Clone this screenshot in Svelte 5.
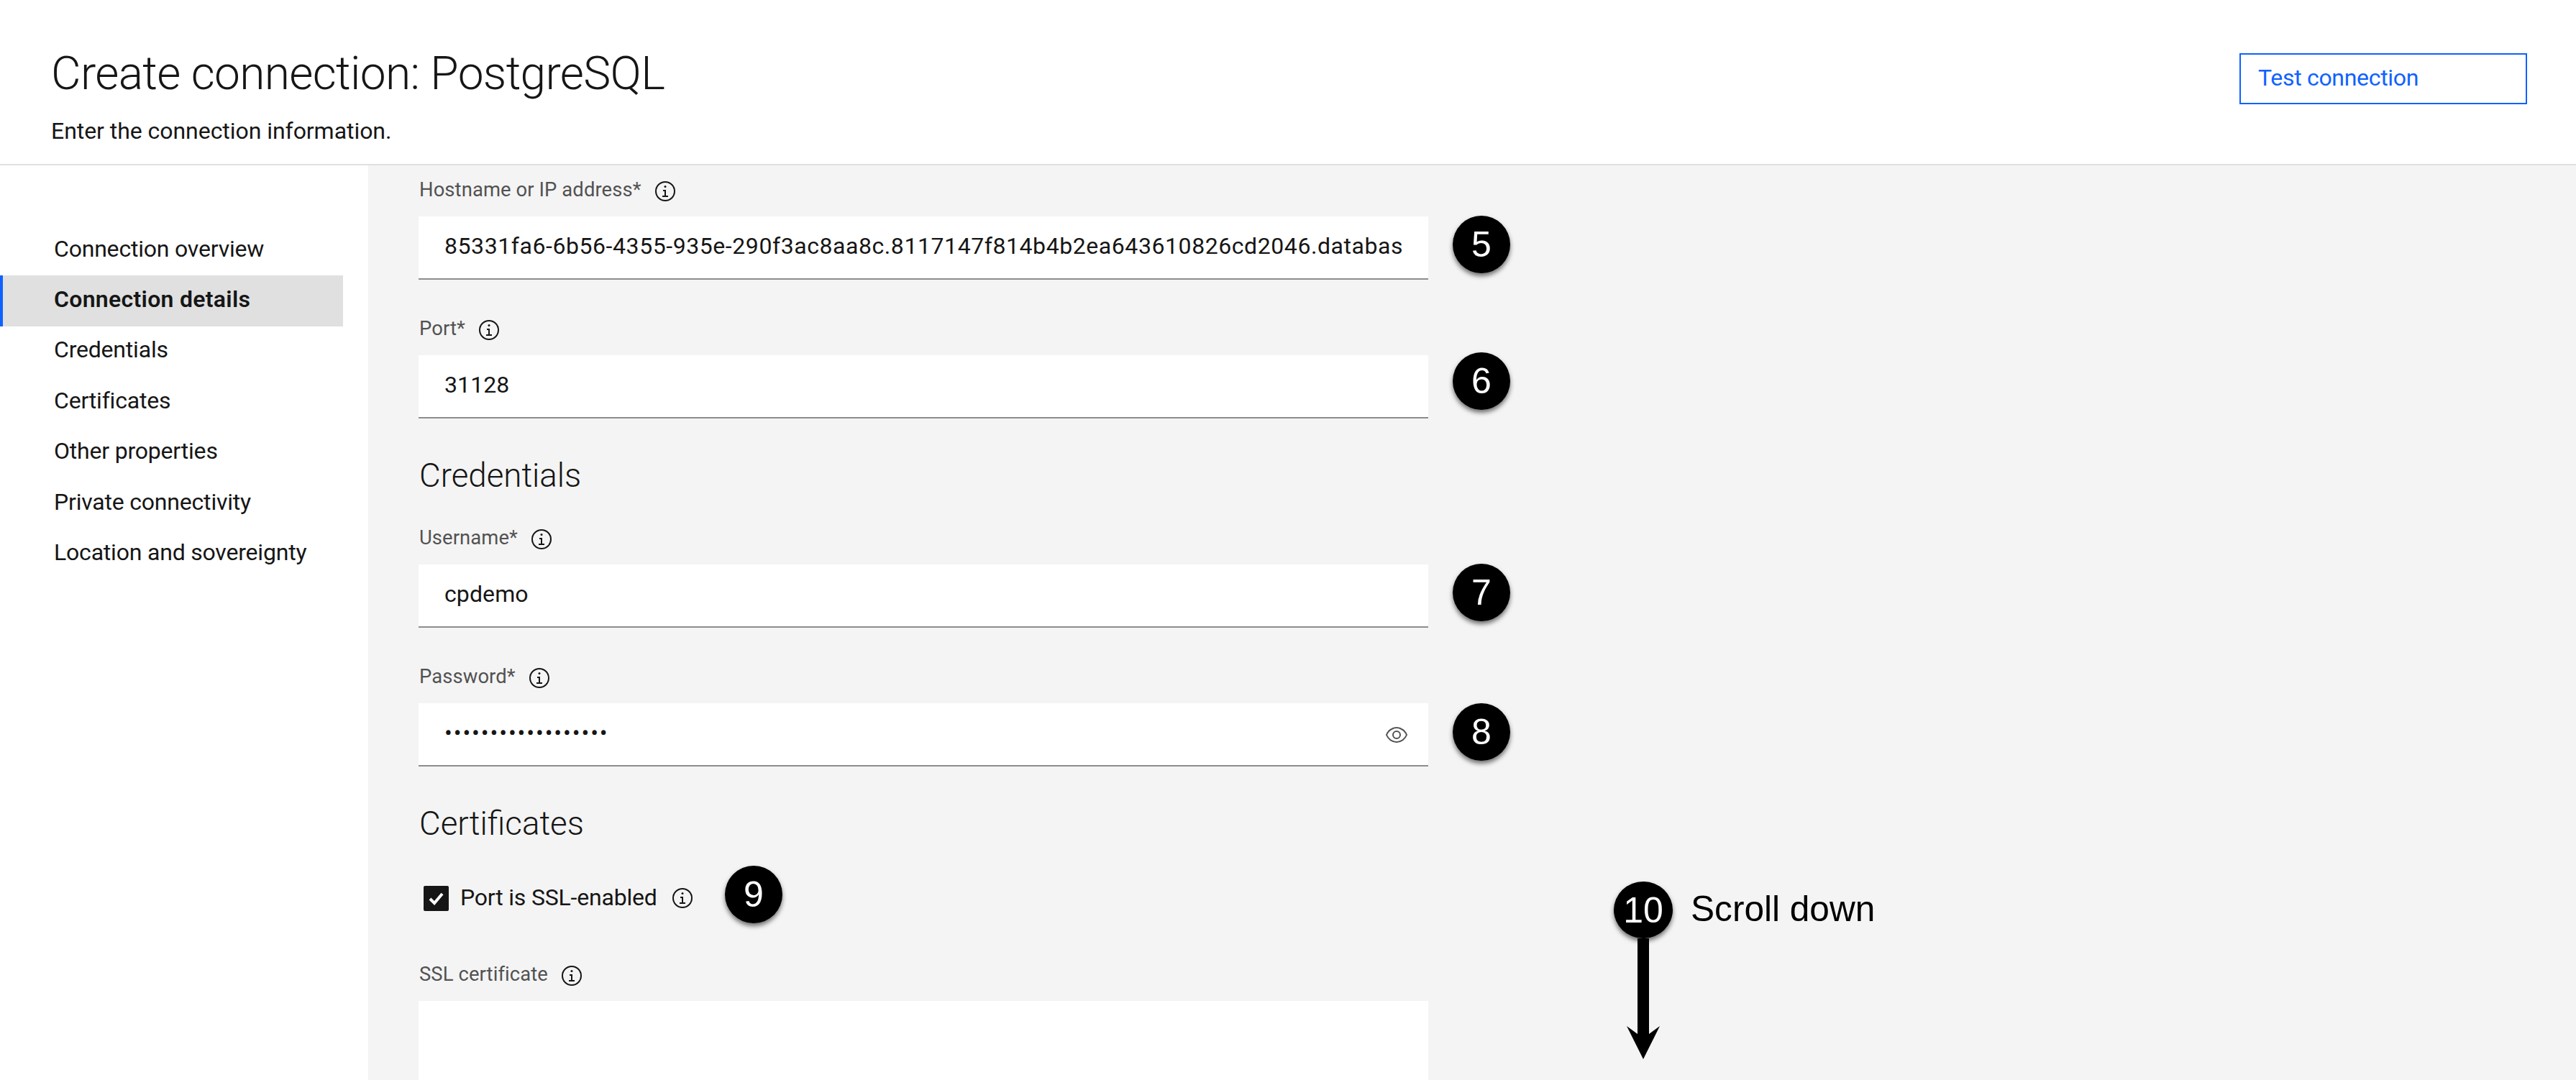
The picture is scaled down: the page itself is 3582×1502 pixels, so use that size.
<script>
  const nav = ['Connection overview', 'Connection details', 'Credentials', 'Certificates', 'Other properties', 'Private connectivity', 'Location and sovereignty'];
</script>

{#snippet info()}
  <svg class="info" viewBox="0 0 16 16" aria-hidden="true">
    <path d="M8.5 11V7h-2v1h1v3H6v1h4v-1z" />
    <path d="M8 4a.75.75 0 1 0 0 1.5A.75.75 0 0 0 8 4z" />
    <path d="M8 15A7 7 0 1 1 8 1a7 7 0 0 1 0 14zM8 2a6 6 0 1 0 0 12A6 6 0 0 0 8 2z" />
  </svg>
{/snippet}

{#snippet field(label, value, badge, offset, type)}
  <div class="group">
    <div class="label"><span>{label}</span>{@render info()}</div>
    <div class="field">
      {#if type === 'password'}
        <span class="dots">{value}</span>
        <svg class="eye" viewBox="0 0 16 16" aria-hidden="true">
          <path d="M15.47 7.83A8.35 8.35 0 0 0 8 2.5 8.35 8.35 0 0 0 .53 7.83a.5.5 0 0 0 0 .34A8.35 8.35 0 0 0 8 13.5a8.35 8.35 0 0 0 7.47-5.33.5.5 0 0 0 0-.34zM8 12.5c-2.65 0-5.45-1.96-6.47-4.5C2.55 5.46 5.35 3.5 8 3.5s5.45 1.96 6.47 4.5C13.45 10.54 10.65 12.5 8 12.5z" />
          <path d="M8 5a3 3 0 1 0 0 6 3 3 0 0 0 0-6zm0 5a2 2 0 1 1 0-4 2 2 0 0 1 0 4z" />
        </svg>
      {:else}
        <span class="value">{value}</span>
      {/if}
      <span class="badge beside" style:top="{offset}px">{badge}</span>
    </div>
  </div>
{/snippet}

<div class="page">
  <header class="header">
    <div>
      <h1>Create connection: PostgreSQL</h1>
      <p>Enter the connection information.</p>
    </div>
    <button class="test">Test connection</button>
  </header>
  <div class="body">
    <nav class="nav">
      {#each nav as item, i}
        <div class="nav-item" class:active={i === 1}>{item}</div>
      {/each}
    </nav>
    <main class="content">
      {@render field('Hostname or IP address*', '85331fa6-6b56-4355-935e-290f3ac8aa8c.8117147f814b4b2ea643610826cd2046.databas', '5', -1)}
      {@render field('Port*', '31128', '6', -4)}
      <h2 class="credentials">Credentials</h2>
      {@render field('Username*', 'cpdemo', '7', -1)}
      {@render field('Password*', '••••••••••••••••••', '8', 0, 'password')}
      <h2 class="certificates">Certificates</h2>
      <div class="check-row">
        <span class="checkbox">
          <svg viewBox="0 0 35 35" aria-hidden="true"><path d="M9 18l6 6 11-13" /></svg>
        </span>
        <span class="check-label">Port is SSL-enabled</span>
        {@render info()}
        <span class="badge nine">9</span>
      </div>
      <div class="label ssl"><span>SSL certificate</span>{@render info()}</div>
      <div class="textarea"></div>

      <div class="scroll-note">
        <span class="badge ten">10</span>
        <span class="scroll-text">Scroll down</span>
        <svg class="arrow" viewBox="0 0 46 168" aria-hidden="true">
          <path d="M15 0H31V133L46 122 23 168 0 122 15 133z" />
        </svg>
      </div>
    </main>
  </div>
</div>

<style>
  :global(body) { margin: 0; background: #fff; }
  .page {
    width: 3582px;
    height: 1502px;
    overflow: hidden;
    display: flex;
    flex-direction: column;
    font-family: Roboto, "Noto Sans", sans-serif;
    color: #161616;
  }
  .header {
    height: 230px;
    box-sizing: border-box;
    flex: none;
    border-bottom: 2px solid #e0e0e0;
    display: flex;
    justify-content: space-between;
    padding: 0 68px 0 71px;
    background: #fff;
  }
  h1 {
    margin: 70px 0 0;
    font-weight: 300;
    font-size: 64px;
    line-height: 66px;
    letter-spacing: -0.65px;
  }
  .header p {
    margin: 25px 0 0;
    font-size: 32px;
    line-height: 42px;
    letter-spacing: -0.05px;
  }
  .test {
    margin-top: 74px;
    width: 400px;
    height: 71px;
    box-sizing: border-box;
    border: 2px solid #0f62fe;
    background: #fff;
    color: #0f62fe;
    font: 400 32px/1 Roboto, sans-serif;
    text-align: left;
    padding: 0 0 3px 24px;
    letter-spacing: -0.3px;
  }
  .body { flex: 1; display: flex; min-height: 0; }
  .nav {
    width: 512px;
    flex: none;
    box-sizing: border-box;
    padding-top: 83px;
    background: #fff;
  }
  .nav-item {
    width: 477px;
    height: 70.4px;
    box-sizing: border-box;
    padding: 0 0 5px 75px;
    display: flex;
    align-items: center;
    font-size: 32px;
    letter-spacing: -0.2px;
  }
  .nav-item.active {
    background: #e0e0e0;
    border-left: 4px solid #0f62fe;
    padding-left: 71px;
    font-weight: 600;
    letter-spacing: 0.3px;
  }
  .content {
    flex: 1;
    position: relative;
    background: #f4f4f4;
    padding-left: 70px;
    min-width: 0;
  }
  .group { width: 1404px; }
  .group + .group { margin-top: 34px; }
  .label {
    height: 71px;
    display: flex;
    align-items: center;
    gap: 17px;
    font-size: 27.4px;
    color: #525252;
    letter-spacing: 0.1px;
    box-sizing: border-box;
    padding-left: 1px;
  }
  .label span { margin-bottom: 3px; }
  .info { width: 32px; height: 32px; fill: #161616; flex: none; }
  .field {
    position: relative;
    height: 88px;
    box-sizing: border-box;
    background: #fff;
    border-bottom: 2px solid #8d8d8d;
    padding: 0 36px 4px;
    display: flex;
    align-items: center;
    font-size: 32px;
    letter-spacing: 0.1px;
    white-space: nowrap;
  }
  .group:first-child .field { letter-spacing: 0.57px; }
  .value { overflow: hidden; flex: 1; }
  .dots { flex: 1; letter-spacing: 1.9px; }
  .eye { position: absolute; right: 28px; top: 28px; width: 32px; height: 32px; fill: #525252; }
  .badge {
    display: flex;
    align-items: center;
    justify-content: center;
    width: 80px;
    height: 80px;
    border-radius: 50%;
    background: #000;
    color: #fff;
    font: 400 50px/1 "Liberation Sans", Arial, sans-serif;
    letter-spacing: 0;
    box-shadow: 0 4px 6px rgba(0,0,0,.55);
  }
  .beside { position: absolute; left: calc(100% + 34px); }
  h2 {
    margin: 0;
    font-size: 45.7px;
    font-weight: 300;
    line-height: 56px;
    letter-spacing: 0;
    padding-left: 1px;
  }
  .credentials { margin: 52px 0 24px; }
  .certificates { margin: 52px 0 45px; }
  .check-row {
    position: relative;
    display: flex;
    align-items: center;
    height: 60px;
    padding-left: 7px;
  }
  .checkbox {
    width: 35px;
    height: 35px;
    background: #161616;
    border-radius: 2px;
    flex: none;
  }
  .checkbox svg { display: block; fill: none; stroke: #fff; stroke-width: 4; }
  .check-label {
    margin: 0 19px 3px 16px;
    font-size: 32px;
    letter-spacing: -0.2px;
  }
  .nine { position: absolute; left: 426px; top: -15px; }
  .ssl { margin-top: 42px; }
  .textarea { width: 1404px; height: 300px; background: #fff; }
  .scroll-note { position: absolute; left: 1732px; top: 996px; width: 400px; height: 260px; }
  .ten { position: absolute; left: 0; top: 0; width: 82px; height: 79px; }
  .scroll-text {
    position: absolute;
    left: 107px;
    top: 8px;
    font: 400 49.6px/60px "Liberation Sans", Arial, sans-serif;
    color: #000;
  }
  .arrow { position: absolute; left: 18px; top: 79px; width: 46px; height: 168px; fill: #000; }
</style>
